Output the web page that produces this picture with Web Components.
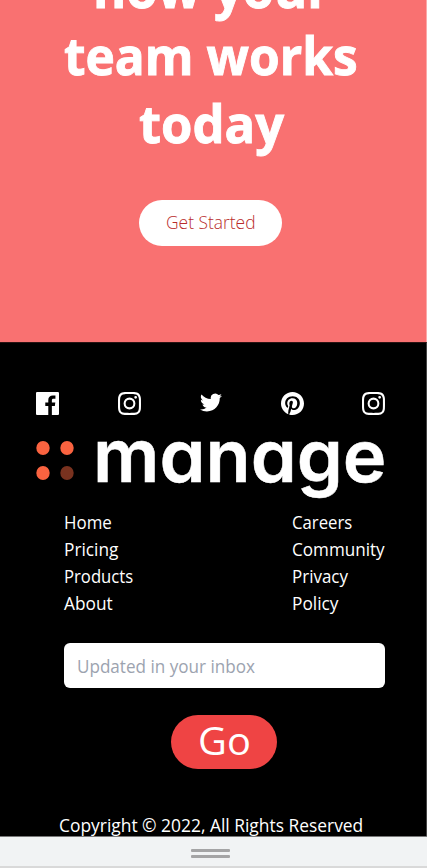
<!DOCTYPE html>
<html lang="en"><head><meta charset="utf-8"><title>Manage</title>
<style>html,body{margin:0;height:100%;overflow:hidden}body{font-family:"Open Sans","Noto Sans",sans-serif;background:#f1f3f4}</style></head>
<body><manage-page></manage-page>
<script>
const define = (name, html, setup) => customElements.define(name, class extends HTMLElement {
  connectedCallback() {
    if (this.shadowRoot) return;
    this.attachShadow({mode: 'open'}).innerHTML = html;
    if (setup) setup(this);
  }
});

// One line of text condensed or widened to the width given in its w attribute.
define('fit-text', `<style>:host{display:block;white-space:nowrap}span{display:inline-block;transform-origin:0 50%}</style><span><slot></slot></span>`, el => {
  const span = el.shadowRoot.querySelector('span'), w = +el.getAttribute('w');
  el.style.width = w + 'px';
  span.style.transform = `scaleX(${w / span.offsetWidth})`;
});

const icons = {
  facebook: 'M22.675 0H1.325C.593 0 0 .593 0 1.325v21.351C0 23.407.593 24 1.325 24H12.82v-9.294H9.692v-3.622h3.128V8.413c0-3.1 1.893-4.788 4.659-4.788 1.325 0 2.463.099 2.795.143v3.24l-1.918.001c-1.504 0-1.795.715-1.795 1.763v2.313h3.587l-.467 3.622h-3.12V24h6.116c.73 0 1.323-.593 1.323-1.325V1.325C24 .593 23.407 0 22.675 0z',
  instagram: 'M12 2.163c3.204 0 3.584.012 4.85.07 3.252.148 4.771 1.691 4.919 4.919.058 1.265.069 1.645.069 4.849 0 3.205-.012 3.584-.069 4.849-.149 3.225-1.664 4.771-4.919 4.919-1.266.058-1.644.07-4.85.07-3.204 0-3.584-.012-4.849-.07-3.26-.149-4.771-1.699-4.919-4.92-.058-1.265-.07-1.644-.07-4.849 0-3.204.013-3.583.07-4.849.149-3.227 1.664-4.771 4.919-4.919 1.266-.057 1.645-.069 4.849-.069zM12 0C8.741 0 8.333.014 7.053.072 2.695.272.273 2.69.073 7.052.014 8.333 0 8.741 0 12c0 3.259.014 3.668.072 4.948.2 4.358 2.618 6.78 6.98 6.98C8.333 23.986 8.741 24 12 24c3.259 0 3.668-.014 4.948-.072 4.354-.2 6.782-2.618 6.979-6.98.059-1.28.073-1.689.073-4.948 0-3.259-.014-3.667-.072-4.947-.196-4.354-2.617-6.78-6.979-6.98C15.668.014 15.259 0 12 0zm0 5.838a6.162 6.162 0 100 12.324 6.162 6.162 0 000-12.324zM12 16a4 4 0 110-8 4 4 0 010 8zm6.406-11.845a1.44 1.44 0 100 2.881 1.44 1.44 0 000-2.881z',
  twitter: 'M24 4.557a9.83 9.83 0 01-2.828.775 4.932 4.932 0 002.165-2.724 9.864 9.864 0 01-3.127 1.195 4.916 4.916 0 00-8.384 4.482C7.691 8.094 4.066 6.13 1.64 3.161a4.822 4.822 0 001.523 6.574 4.903 4.903 0 01-2.229-.616c-.054 2.281 1.581 4.415 3.949 4.89a4.935 4.935 0 01-2.224.084 4.928 4.928 0 004.6 3.419A9.9 9.9 0 010 19.54a13.94 13.94 0 007.548 2.212c9.142 0 14.307-7.721 13.995-14.646A10.025 10.025 0 0024 4.557z',
  pinterest: 'M12 0C5.373 0 0 5.372 0 12c0 5.084 3.163 9.426 7.627 11.174-.105-.949-.2-2.405.042-3.441.218-.937 1.407-5.965 1.407-5.965s-.359-.719-.359-1.782c0-1.668.967-2.914 2.171-2.914 1.023 0 1.518.769 1.518 1.69 0 1.029-.655 2.568-.994 3.995-.283 1.194.599 2.169 1.777 2.169 2.133 0 3.772-2.249 3.772-5.495 0-2.873-2.064-4.882-5.012-4.882-3.414 0-5.418 2.561-5.418 5.207 0 1.031.397 2.138.893 2.738a.36.36 0 01.083.345l-.333 1.36c-.053.22-.174.267-.402.161-1.499-.698-2.436-2.889-2.436-4.649 0-3.785 2.75-7.262 7.929-7.262 4.163 0 7.398 2.967 7.398 6.931 0 4.136-2.607 7.464-6.227 7.464-1.216 0-2.359-.631-2.75-1.378l-.748 2.853c-.271 1.043-1.002 2.35-1.492 3.146C9.57 23.812 10.763 24 12 24c6.627 0 12-5.373 12-12 0-6.628-5.373-12-12-12z'
};
define('social-icon', `<style>:host{display:block;width:23px;height:23px}:host([name=twitter]){padding-left:1px;width:22px}:host([name=twitter]) svg{margin-top:-1px}svg{display:block;width:100%;height:100%}</style><svg viewBox="0 0 24 24" fill="#fff"><path/></svg>`,
  el => el.shadowRoot.querySelector('path').setAttribute('d', icons[el.getAttribute('name')]));

define('manage-logo', `<style>:host{display:block;height:66px}svg{display:block;overflow:visible}text{font:600 73px Inter,sans-serif;font-feature-settings:"cv11" 1}</style>
<svg width="349" height="66"><g fill="#fa6340"><ellipse cx="7" cy="12" rx="6.7" ry="7"/><ellipse cx="31" cy="12" rx="6.7" ry="7"/><ellipse cx="7" cy="37" rx="6.7" ry="7"/></g><ellipse cx="31" cy="37" rx="6.7" ry="7" fill="#79321f"/>
<text x="57" y="45.5" fill="#fff" stroke="#fff" stroke-width=".5" textLength="293.5" lengthAdjust="spacingAndGlyphs">manage</text></svg>`);

define('pill-button', `<style>:host{display:flex;box-sizing:border-box;align-items:center;justify-content:center;border-radius:99px}</style><slot></slot>`);

define('call-to-action', `<style>
:host{display:flex;flex-direction:column;align-items:center;height:342px;background:#f97171;border-right:1px solid #fba9a9;padding-right:4px;box-sizing:border-box}
h2{margin:-46.5px 0 0;font-size:52.5px;font-weight:700;line-height:67.5px;color:#fff;-webkit-text-stroke:.9px #fff;display:flex;flex-direction:column;align-items:center}
pill-button{margin-top:44px;margin-right:1px;width:143px;height:46px;background:#fff;color:#b92b2b;font-size:17.6px;font-weight:350;padding-bottom:2px}
</style><h2><fit-text w="237">how your</fit-text><fit-text w="294">team works</fit-text><fit-text w="145">today</fit-text></h2><pill-button><fit-text w="90">Get Started</fit-text></pill-button>`);

define('link-list', `<style>:host{display:flex;flex-direction:column;line-height:27px}</style><slot></slot>`);

define('email-field', `<style>:host{display:flex;flex:none;align-items:center;box-sizing:border-box;height:45px;background:#fff;border-radius:6px;padding:2px 13px 0;color:#9ca3af}</style><slot></slot>`);

define('site-footer', `<style>
:host{display:flex;flex-direction:column;height:494px;box-sizing:border-box;background:#000;border-right:1px solid #444;border-top:1px solid #2a1313;padding:48.5px 41px 0 36px;color:#fff;font-size:17.3px;overflow:hidden}
:host>*,.social,nav,.go,.copy,manage-logo{flex:none}
.social{display:flex;justify-content:space-between}
manage-logo{height:66px;margin:21px 0 7.5px}
nav{display:flex;justify-content:space-between;margin-left:28px;margin-bottom:26px}
email-field{margin-left:28px}
.go{margin:27px 0 0 135px;width:106px;height:54px;background:#ef4444;font-size:39px;padding-bottom:5px}
.copy{margin:42.5px 0 0 23px;line-height:27px}
</style>
<div class="social"><social-icon name="facebook"></social-icon><social-icon name="instagram"></social-icon><social-icon name="twitter"></social-icon><social-icon name="pinterest"></social-icon><social-icon name="instagram"></social-icon></div>
<manage-logo></manage-logo>
<nav><link-list><fit-text w="48">Home</fit-text><fit-text w="54">Pricing</fit-text><fit-text w="69.5">Products</fit-text><fit-text w="49">About</fit-text></link-list>
<link-list><fit-text w="60">Careers</fit-text><fit-text w="93">Community</fit-text><fit-text w="56">Privacy</fit-text><fit-text w="46">Policy</fit-text></link-list></nav>
<email-field><fit-text w="178">Updated in your inbox</fit-text></email-field>
<pill-button class="go"><fit-text w="53">Go</fit-text></pill-button>
<fit-text class="copy" w="304">Copyright © 2022, All Rights Reserved</fit-text>`);

define('drag-handle', `<style>:host{display:flex;flex-direction:column;align-items:center;gap:3px;height:32px;box-sizing:border-box;padding:12px 6px 0 0;background:#f1f3f4;border-top:1px solid #777;border-bottom:2px solid #d9d9d9}i{width:39px;height:3px;border-radius:1px;background:#a4a4a5}</style><i></i><i></i>`);

define('manage-page', `<style>:host{display:flex;flex-direction:column;height:868px;overflow:hidden}call-to-action,site-footer,drag-handle{flex:none}</style><call-to-action></call-to-action><site-footer></site-footer><drag-handle></drag-handle>`);
</script></body></html>
